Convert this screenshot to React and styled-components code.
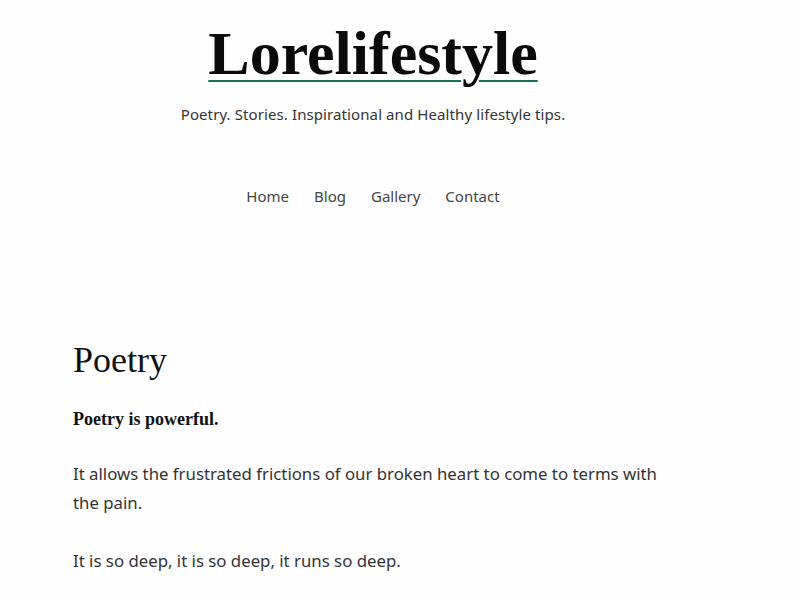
import styled, { createGlobalStyle } from "styled-components";

const GlobalStyle = createGlobalStyle`
    html, body {
        margin: 0;
        padding: 0;
        background: #fefefe;
    }
    body {
        font-family: "Noto Sans", "Open Sans", sans-serif;
        color: #333;
    }
`;

const Page = styled.div`
    width: 800px;
    min-height: 600px;
    overflow: hidden;
`;

const Header = styled.header`
    width: 746px;
    display: flex;
    flex-direction: column;
    align-items: center;
    padding-top: 15px;
`;

const SiteTitle = styled.a`
    font-family: "Liberation Serif", "DejaVu Serif", serif;
    font-weight: 700;
    font-size: 62px;
    line-height: 76px;
    color: #0b0b0b;
    text-decoration: underline;
    text-decoration-color: #1b6e4f;
    text-decoration-thickness: 2px;
    text-underline-offset: 6px;
    text-decoration-skip-ink: auto;
`;

const Tagline = styled.p`
    margin: 13px 0 0;
    font-size: 15px;
    line-height: 20px;
    letter-spacing: 0.1px;
    color: #333;
`;

const Nav = styled.nav`
    display: flex;
    gap: 25px;
    margin-top: 62px;
`;

const NavLink = styled.a`
    font-size: 15px;
    line-height: 20px;
    color: #444;
    text-decoration: none;
`;

const Main = styled.main`
    padding: 132px 0 0 73px;
    width: 598px;
`;

const Title = styled.h1`
    margin: 0;
    font-family: "Liberation Serif", "DejaVu Serif", serif;
    font-weight: 400;
    font-size: 36px;
    line-height: 44px;
    color: #111;
`;

const Lead = styled.p`
    margin: 25px 0 0;
    font-family: "Liberation Serif", "DejaVu Serif", serif;
    font-weight: 700;
    font-size: 18px;
    line-height: 24px;
    color: #111;
`;

const Text = styled.p`
    margin: 28px 0 0;
    font-size: 16.8px;
    line-height: 29px;
    color: #333;

    & + & {
        margin-top: 29px;
    }
`;

export default function App() {
    return (
        <Page>
            <GlobalStyle />
            <Header>
                <SiteTitle href="#">Lorelifestyle</SiteTitle>
                <Tagline>Poetry. Stories. Inspirational and Healthy lifestyle tips.</Tagline>
                <Nav>
                    <NavLink href="#">Home</NavLink>
                    <NavLink href="#">Blog</NavLink>
                    <NavLink href="#">Gallery</NavLink>
                    <NavLink href="#">Contact</NavLink>
                </Nav>
            </Header>
            <Main>
                <Title>Poetry</Title>
                <Lead>Poetry is powerful.</Lead>
                <Text>
                    It allows the frustrated frictions of our broken heart to come to terms with
                    the pain.
                </Text>
                <Text>It is so deep, it is so deep, it runs so deep.</Text>
            </Main>
        </Page>
    );
}
